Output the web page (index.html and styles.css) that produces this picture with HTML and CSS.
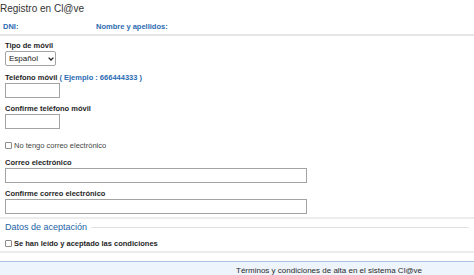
FILE: index.html
```html
<!DOCTYPE html>
<html lang="es">
<head>
<meta charset="utf-8">
<link rel="stylesheet" href="styles.css">
</head>
<body>
<div class="page">
  <h1 class="title">Registro en Cl@ve</h1>
  <div class="ident">
    <span class="ident-dni">DNI:</span>
    <span class="ident-name">Nombre y apellidos:</span>
  </div>
  <div class="form">
    <div class="field first">
      <label class="lbl">Tipo de móvil</label>
      <div class="sel-wrap">
        <select class="sel"><option>Español</option></select>
        <svg class="chev" width="6" height="4" viewBox="0 0 6 4"><path d="M0.6 0.6 L3 3 L5.4 0.6" fill="none" stroke="#222" stroke-width="1.3"/></svg>
      </div>
    </div>
    <div class="field">
      <label class="lbl">Teléfono móvil <span class="hint">( Ejemplo : 666444333 )</span></label>
      <input class="inp short" type="text">
    </div>
    <div class="field">
      <label class="lbl">Confirme teléfono móvil</label>
      <input class="inp short" type="text">
    </div>
    <label class="check plain"><input type="checkbox" class="cb"><span>No tengo correo electrónico</span></label>
    <div class="field">
      <label class="lbl">Correo electrónico</label>
      <input class="inp long" type="text">
    </div>
    <div class="field last">
      <label class="lbl">Confirme correo electrónico</label>
      <input class="inp long" type="text">
    </div>
  </div>
  <div class="accept">
    <div class="legend"><span class="legend-text">Datos de aceptación</span><span class="legend-line"></span></div>
    <label class="check bold"><input type="checkbox" class="cb"><span>Se han leído y aceptado las condiciones</span></label>
  </div>
  <div class="terms">
    <div class="terms-title">Términos y condiciones de alta en el sistema Cl@ve</div>
  </div>
</div>
</body>
</html>
```
FILE: styles.css
```css
* { box-sizing: border-box; }
html, body { margin: 0; padding: 0; background: #fff; }
body { font-family: "Liberation Sans", Arial, sans-serif; color: #1e1e1e; }
.page { width: 474px; height: 275px; overflow: hidden; }
.title {
  margin: 0; padding: 0;
  font-size: 10px; font-weight: normal; color: #333; height: 18px; line-height: 18px;
}
.ident {
  display: flex; height: 18px; align-items: center;
  font-size: 7.5px; font-weight: bold; color: #2b6bb2;
  border-bottom: 2px solid #e6e6e6; padding-left: 3px;
}
.ident-dni { width: 93px; }
.form { padding: 5px 5px 0 5px; }
.field { display: flex; flex-direction: column; align-items: flex-start; margin-bottom: 6px; }
.field.first { margin-bottom: 7px; }
.field.last { margin-bottom: 3px; }
.lbl { font-size: 7.5px; font-weight: bold; color: #1e1e1e; line-height: 9px; margin-bottom: 1px; }
.hint { color: #2b6bb2; }
.sel-wrap { position: relative; width: 51px; height: 15px; }
.sel {
  appearance: none; -webkit-appearance: none; display: block;
  width: 51px; height: 15px; font-size: 8px; line-height: 13px; font-family: "Liberation Sans", Arial, sans-serif;
  border: 1px solid #a3a3a3; border-radius: 2px; padding: 0 0 0 3px; margin: 0; background: #fff; color: #222;
}
.chev { position: absolute; left: 43px; top: 6px; }
.inp { height: 15px; border: 1px solid #a3a3a3; border-radius: 0; padding: 0; margin: 0; background: #fff; display: block; }
.inp.short { width: 55px; }
.inp.long { width: 302px; }
.check { display: flex; align-items: center; gap: 2px; font-size: 7.5px; line-height: 9px; color: #333; }
.check.plain { margin: 12px 0 8px 0; font-weight: normal; color: #444; }
.check.bold { font-weight: bold; color: #1e1e1e; }
.cb {
  appearance: none; -webkit-appearance: none;
  width: 7px; height: 7px; margin: 0; border: 1px solid #8a8a8a; border-radius: 1px; background: #fff;
}
.accept { border-top: 2px solid #ececec; border-bottom: 2px solid #ececec; padding: 0 5px 0 5px; }
.legend { display: flex; align-items: center; height: 16px; gap: 4px; }
.legend-text { font-size: 9px; color: #2563a8; }
.legend-line { flex: 1; border-top: 1px solid #e2e2e2; }
.accept .check { margin: 4px 0 3px 0; }
.terms { margin-top: 8px; border-top: 1px solid #a9c5e3; background: #eef4fb; height: 30px; }
.terms-title { padding: 4px 0 0 236px; font-size: 8px; line-height: 10px; color: #2a2a2a; white-space: nowrap; }
```
